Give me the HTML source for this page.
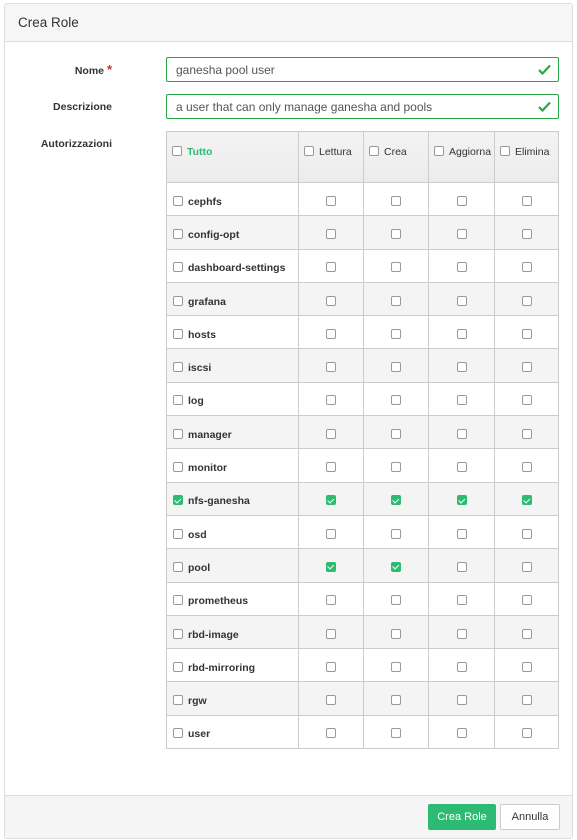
<!DOCTYPE html>
<html><head><meta charset="utf-8"><style>
*{box-sizing:border-box;margin:0;padding:0}
body{width:577px;height:840px;background:#fff;font-family:"Liberation Sans",sans-serif;font-size:11px;color:#333;position:relative;overflow:hidden}
.card{position:absolute;left:4px;top:3px;width:569px;height:836px;border:1px solid #ddd;border-radius:3px;background:#fff}
.hdr{position:absolute;left:0;top:0;right:0;height:38px;background:#f6f6f6;border-bottom:1px solid #ddd;font-size:13.5px;color:#333;padding:11px 0 0 13px}
.lbl{position:absolute;right:460px;font-weight:bold;font-size:10.5px;color:#333}
.inp{position:absolute;left:161px;width:393px;height:25px;border:1px solid #28a745;border-radius:2px;font-size:12px;color:#555;padding:5px 0 0 9px}
.inp svg{position:absolute;right:7px;top:6px}
table{position:absolute;left:161px;top:127px;border-collapse:collapse;table-layout:fixed}
td,th{border:1px solid #ccc;height:33.3px;font-size:10.5px;font-weight:normal;text-align:center;vertical-align:middle;padding-top:5px}
th{height:51px;background:linear-gradient(#f3f3f3,#ececec);text-align:left;padding:0 0 10px 5px;white-space:nowrap;overflow:hidden}
td.n{text-align:left;padding-left:6px;font-weight:bold;color:#333}
tr:nth-child(odd) td{background:#f4f4f4}
.cb{display:inline-block;width:10px;height:10px;border:1px solid #999;border-radius:2px;vertical-align:-1px;background:#fff}
.ck{display:inline-block;width:10px;height:10px;border-radius:2px;background:#2dbb74;vertical-align:-1px;position:relative}
.ck:after{content:"";position:absolute;left:3px;top:1.5px;width:2.5px;height:4.5px;border:solid #fff;border-width:0 1.3px 1.3px 0;transform:rotate(45deg)}
td.n .cb,td.n .ck,th .cb{margin-right:5px}
.ftr{position:absolute;left:0;right:0;bottom:0;height:43px;background:#f5f5f5;border-top:1px solid #ddd}
.b1{position:absolute;left:423px;top:8px;width:68px;height:26px;background:#2dbb74;color:#fff;border-radius:2px;font-size:11px;text-align:center;line-height:26px}
.b2{position:absolute;left:495px;top:8px;width:60px;height:26px;background:#fff;color:#333;border:1px solid #ccc;border-radius:2px;font-size:11px;text-align:center;line-height:24px}
</style></head><body>
<div class="card">
<div class="hdr">Crea Role</div>
<div class="lbl" style="top:58px">Nome <span style="color:#c33;font-size:13px">*</span></div>
<div class="inp" style="top:53px">ganesha pool user<svg width="13" height="11" viewBox="0 0 13 11"><path d="M1 6l3.5 3.5L12 1.5" stroke="#28a745" stroke-width="2.2" fill="none"/></svg></div>
<div class="lbl" style="top:97px">Descrizione</div>
<div class="inp" style="top:90px">a user that can only manage ganesha and pools<svg width="13" height="11" viewBox="0 0 13 11"><path d="M1 6l3.5 3.5L12 1.5" stroke="#28a745" stroke-width="2.2" fill="none"/></svg></div>
<div class="lbl" style="top:134px">Autorizzazioni</div>
<table>
<colgroup><col style="width:132px"><col style="width:65px"><col style="width:65px"><col style="width:66px"><col style="width:64px"></colgroup>
<tr><th><span class="cb"></span><span style="color:#2dbb74;font-weight:bold">Tutto</span></th><th><span class="cb"></span>Lettura</th><th><span class="cb"></span>Crea</th><th><span class="cb"></span>Aggiorna</th><th><span class="cb"></span>Elimina</th></tr>
<tr><td class="n"><span class="cb"></span>cephfs</td><td><span class="cb"></span></td><td><span class="cb"></span></td><td><span class="cb"></span></td><td><span class="cb"></span></td></tr>
<tr><td class="n"><span class="cb"></span>config-opt</td><td><span class="cb"></span></td><td><span class="cb"></span></td><td><span class="cb"></span></td><td><span class="cb"></span></td></tr>
<tr><td class="n"><span class="cb"></span>dashboard-settings</td><td><span class="cb"></span></td><td><span class="cb"></span></td><td><span class="cb"></span></td><td><span class="cb"></span></td></tr>
<tr><td class="n"><span class="cb"></span>grafana</td><td><span class="cb"></span></td><td><span class="cb"></span></td><td><span class="cb"></span></td><td><span class="cb"></span></td></tr>
<tr><td class="n"><span class="cb"></span>hosts</td><td><span class="cb"></span></td><td><span class="cb"></span></td><td><span class="cb"></span></td><td><span class="cb"></span></td></tr>
<tr><td class="n"><span class="cb"></span>iscsi</td><td><span class="cb"></span></td><td><span class="cb"></span></td><td><span class="cb"></span></td><td><span class="cb"></span></td></tr>
<tr><td class="n"><span class="cb"></span>log</td><td><span class="cb"></span></td><td><span class="cb"></span></td><td><span class="cb"></span></td><td><span class="cb"></span></td></tr>
<tr><td class="n"><span class="cb"></span>manager</td><td><span class="cb"></span></td><td><span class="cb"></span></td><td><span class="cb"></span></td><td><span class="cb"></span></td></tr>
<tr><td class="n"><span class="cb"></span>monitor</td><td><span class="cb"></span></td><td><span class="cb"></span></td><td><span class="cb"></span></td><td><span class="cb"></span></td></tr>
<tr><td class="n"><span class="ck"></span>nfs-ganesha</td><td><span class="ck"></span></td><td><span class="ck"></span></td><td><span class="ck"></span></td><td><span class="ck"></span></td></tr>
<tr><td class="n"><span class="cb"></span>osd</td><td><span class="cb"></span></td><td><span class="cb"></span></td><td><span class="cb"></span></td><td><span class="cb"></span></td></tr>
<tr><td class="n"><span class="cb"></span>pool</td><td><span class="ck"></span></td><td><span class="ck"></span></td><td><span class="cb"></span></td><td><span class="cb"></span></td></tr>
<tr><td class="n"><span class="cb"></span>prometheus</td><td><span class="cb"></span></td><td><span class="cb"></span></td><td><span class="cb"></span></td><td><span class="cb"></span></td></tr>
<tr><td class="n"><span class="cb"></span>rbd-image</td><td><span class="cb"></span></td><td><span class="cb"></span></td><td><span class="cb"></span></td><td><span class="cb"></span></td></tr>
<tr><td class="n"><span class="cb"></span>rbd-mirroring</td><td><span class="cb"></span></td><td><span class="cb"></span></td><td><span class="cb"></span></td><td><span class="cb"></span></td></tr>
<tr><td class="n"><span class="cb"></span>rgw</td><td><span class="cb"></span></td><td><span class="cb"></span></td><td><span class="cb"></span></td><td><span class="cb"></span></td></tr>
<tr><td class="n"><span class="cb"></span>user</td><td><span class="cb"></span></td><td><span class="cb"></span></td><td><span class="cb"></span></td><td><span class="cb"></span></td></tr>
</table>
<div class="ftr"><div class="b1">Crea Role</div><div class="b2">Annulla</div></div>
</div>
</body></html>
